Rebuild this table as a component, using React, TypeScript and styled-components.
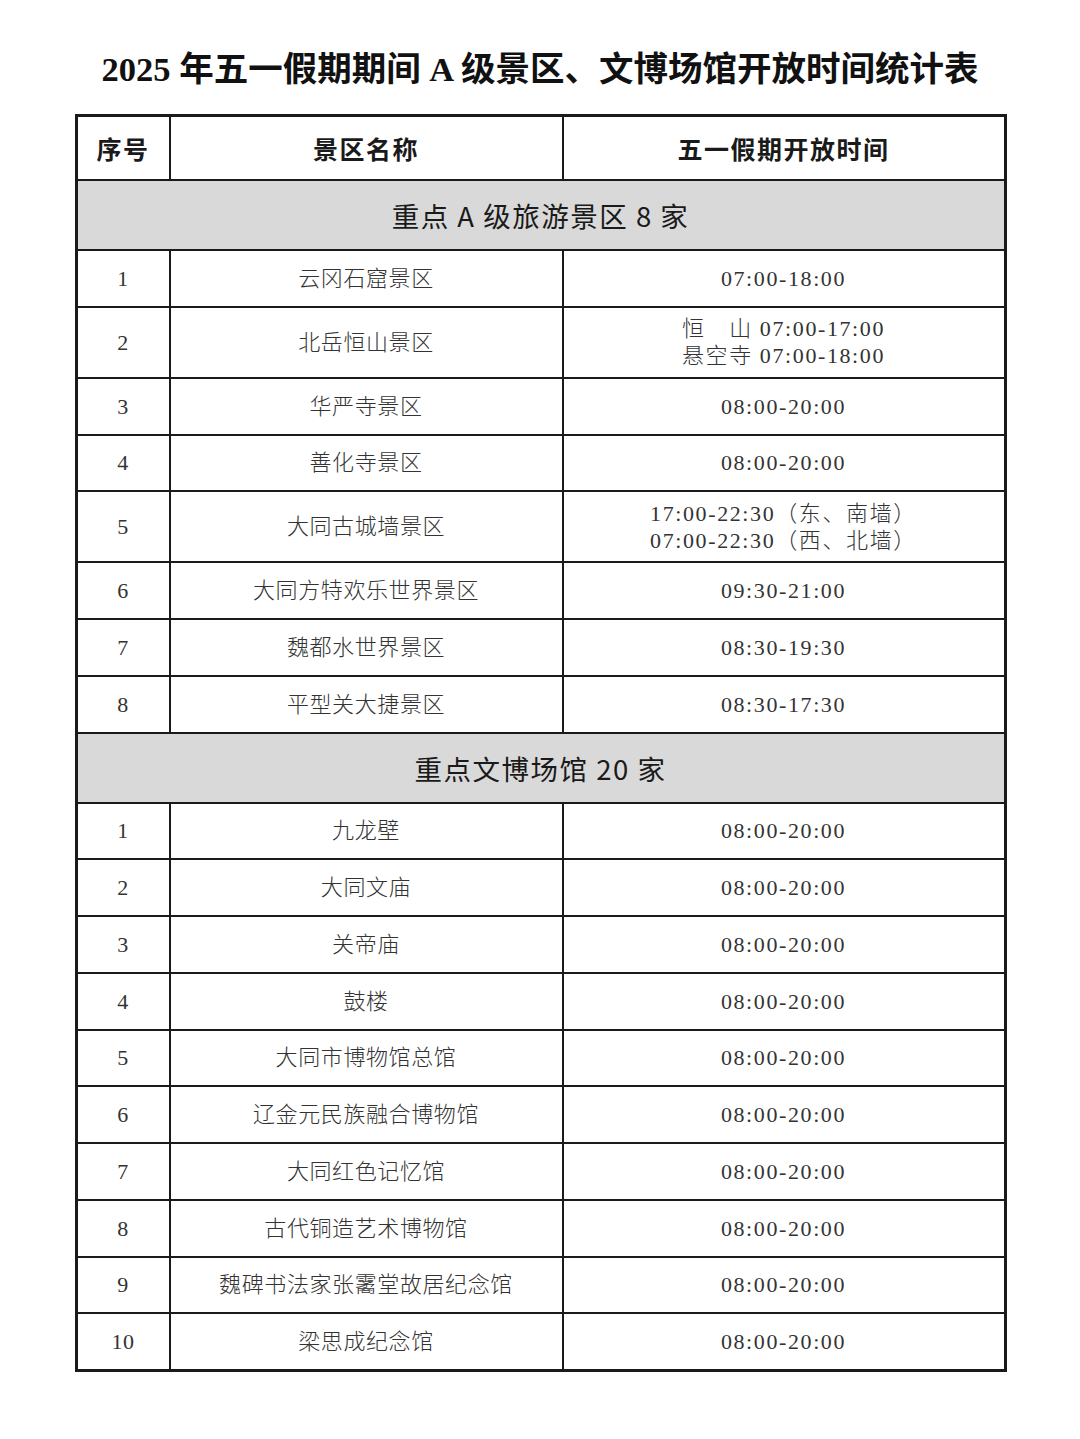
import * as React from 'react'
import styled, { createGlobalStyle } from 'styled-components'

const GlobalStyle = createGlobalStyle`
  html, body {
    margin: 0;
    padding: 0;
    background: #ffffff;
  }
`

const Page = styled.div`
  width: 1080px;
  min-height: 1439px;
  display: flex;
  flex-direction: column;
  align-items: center;
  padding-top: 47px;
  box-sizing: border-box;
  background: #ffffff;
`

const Title = styled.h1`
  margin: 0 0 23px 0;
  font-family: 'Liberation Serif', 'Noto Sans CJK SC', serif;
  font-weight: 700;
  font-size: 34.5px;
  line-height: 44px;
  color: #111;
  white-space: nowrap;
`

const Table = styled.table`
  width: 932px;
  margin-left: 1px;
  border-collapse: collapse;
  border: 3px solid #1a1a1a;
  table-layout: fixed;
`

const HeadCell = styled.th<{ $w?: number }>`
  width: ${(p) => (p.$w ? `${p.$w}px` : 'auto')};
  height: 62px;
  padding: 0;
  border: 2px solid #1a1a1a;
  font-family: 'Noto Sans CJK SC', sans-serif;
  font-weight: 700;
  font-size: 25px;
  letter-spacing: 1.5px;
  color: #1a1a1a;
  text-align: center;
  vertical-align: middle;
`

const SectionCell = styled.td`
  height: 68px;
  padding: 0;
  border: 2px solid #1a1a1a;
  background: #d9d9d9;
  font-family: 'Noto Sans CJK SC', sans-serif;
  font-weight: 400;
  font-size: 27.5px;
  letter-spacing: 1.5px;
  color: #1a1a1a;
  text-align: center;
  vertical-align: middle;
`

const Cell = styled.td<{ $tall?: boolean }>`
  height: ${(p) => (p.$tall ? '69px' : '54.75px')};
  padding: 0;
  border: 2px solid #1a1a1a;
  font-family: 'Liberation Serif', 'Noto Sans CJK SC', serif;
  font-weight: 300;
  font-size: 22px;
  line-height: 27px;
  letter-spacing: 0.6px;
  color: #333;
  text-align: center;
  vertical-align: middle;
`

const Line = styled.div`
  white-space: nowrap;
  letter-spacing: 1.6px;
`

type Row = { no: string; name: string; time: string[] }

const scenic: Row[] = [
  { no: '1', name: '云冈石窟景区', time: ['07:00-18:00'] },
  { no: '2', name: '北岳恒山景区', time: ['恒\u3000山 07:00-17:00', '悬空寺 07:00-18:00'] },
  { no: '3', name: '华严寺景区', time: ['08:00-20:00'] },
  { no: '4', name: '善化寺景区', time: ['08:00-20:00'] },
  { no: '5', name: '大同古城墙景区', time: ['17:00-22:30（东、南墙）', '07:00-22:30（西、北墙）'] },
  { no: '6', name: '大同方特欢乐世界景区', time: ['09:30-21:00'] },
  { no: '7', name: '魏都水世界景区', time: ['08:30-19:30'] },
  { no: '8', name: '平型关大捷景区', time: ['08:30-17:30'] },
]

const museums: Row[] = [
  '九龙壁',
  '大同文庙',
  '关帝庙',
  '鼓楼',
  '大同市博物馆总馆',
  '辽金元民族融合博物馆',
  '大同红色记忆馆',
  '古代铜造艺术博物馆',
  '魏碑书法家张霱堂故居纪念馆',
  '梁思成纪念馆',
].map((name, i) => ({ no: String(i + 1), name, time: ['08:00-20:00'] }))

const renderRows = (rows: Row[]) =>
  rows.map((r) => {
    const tall = r.time.length > 1
    return (
      <tr key={r.no + r.name}>
        <Cell $tall={tall}>{r.no}</Cell>
        <Cell $tall={tall}>{r.name}</Cell>
        <Cell $tall={tall}>
          {r.time.map((t) => (
            <Line key={t}>{t}</Line>
          ))}
        </Cell>
      </tr>
    )
  })

const App = () => {
  return (
    <Page>
      <GlobalStyle />
      <Title>2025 年五一假期期间 A 级景区、文博场馆开放时间统计表</Title>
      <Table>
        <thead>
          <tr>
            <HeadCell $w={91}>序号</HeadCell>
            <HeadCell $w={391}>景区名称</HeadCell>
            <HeadCell>五一假期开放时间</HeadCell>
          </tr>
        </thead>
        <tbody>
          <tr>
            <SectionCell colSpan={3}>重点 A 级旅游景区 8 家</SectionCell>
          </tr>
          {renderRows(scenic)}
          <tr>
            <SectionCell colSpan={3}>重点文博场馆 20 家</SectionCell>
          </tr>
          {renderRows(museums)}
        </tbody>
      </Table>
    </Page>
  )
}

export default App
